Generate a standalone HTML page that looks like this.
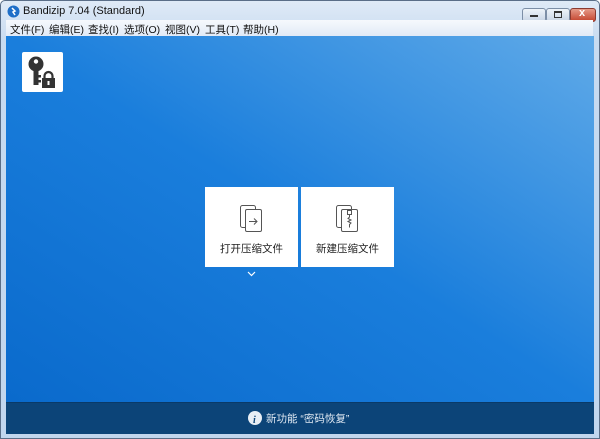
<html><head><style>
body{margin:0;width:600px;height:439px;overflow:hidden;font-family:"Liberation Sans","Noto Sans CJK SC",sans-serif;font-size:11px;position:relative}
.win{position:absolute;left:0;top:0;width:598px;height:437px;border:1px solid #5a6e88;border-radius:5px 5px 0 0;background:linear-gradient(#dfeaf7,#c8dbf0 40px,#c1d6ee);}
.title{position:absolute;left:22px;top:4px;font-size:11px;color:#111;}
.menu{position:absolute;left:6px;top:20px;width:587px;height:16px;background:linear-gradient(#f6f9fd,#e1eaf6);}
.mi{position:absolute;top:2px;font-size:10.5px;color:#111;white-space:nowrap}
.main{position:absolute;left:6px;top:36px;width:588px;height:366px;background:linear-gradient(to top right,#0a6acc 0%,#1a7edc 50%,#60aae8 100%);}
.status{position:absolute;left:6px;top:402px;width:588px;height:31px;background:#0c4478;border-top:1px solid #0a3a68;color:#dfe8f2;}
.tile{position:absolute;top:187px;width:93px;height:80px;background:#fff;}
.tile div{position:absolute;width:100%;top:54px;text-align:center;font-size:10.5px;color:#222}
.btn{position:absolute;top:7px;height:12px;border:1px solid #7c8ea6;border-radius:3px;background:linear-gradient(#eef3f9,#c9d6e6);}
</style></head><body>
<div class="win">
<svg style="position:absolute;left:6px;top:4px" width="13" height="13"><circle cx="6.5" cy="6.5" r="6" fill="#1f6fc8"/><path d="M5 3l3 3-2 1 2 3" stroke="#fff" stroke-width="1.5" fill="none"/></svg>
<div class="title">Bandizip 7.04 (Standard)</div>
<div class="btn" style="left:521px;width:22px"><div style="position:absolute;left:7px;top:6px;width:8px;height:2px;background:#333"></div></div>
<div class="btn" style="left:545px;width:22px"><div style="position:absolute;left:7px;top:2px;width:6px;height:4px;border:1px solid #333;border-top-width:2px"></div></div>
<div class="btn" style="left:569px;width:24px;border-color:#8a3a30;background:linear-gradient(#e59a88,#c4452f)"><div style="position:absolute;left:8px;top:-2px;color:#fff;font-weight:bold;font-size:11px">x</div></div>
</div>
<div class="menu">
<span class="mi" style="left:4px">文件(F)</span><span class="mi" style="left:43px">编辑(E)</span><span class="mi" style="left:82px">查找(I)</span><span class="mi" style="left:118px">选项(O)</span><span class="mi" style="left:159px">视图(V)</span><span class="mi" style="left:199px">工具(T)</span><span class="mi" style="left:237px">帮助(H)</span>
</div>
<div class="main"></div>
<div style="position:absolute;left:22px;top:52px;width:41px;height:40px;background:#fff;border-radius:2px">
<svg width="41" height="40"><circle cx="14" cy="12" r="7.5" fill="#333"/><circle cx="14" cy="9.5" r="2.2" fill="#fff"/><rect x="11.5" y="17" width="5" height="16" fill="#333"/><rect x="16" y="23" width="3" height="2.5" fill="#333"/><rect x="16" y="28" width="3" height="2.5" fill="#333"/><path d="M22.5 27v-3a4 4 0 0 1 8 0v3" stroke="#333" stroke-width="2.2" fill="none"/><rect x="20" y="26" width="13" height="10" fill="#333"/><rect x="25.5" y="29" width="2" height="4" fill="#fff"/></svg>
</div>
<div class="tile" style="left:205px">
<svg style="position:absolute;left:34px;top:17px" width="26" height="30" fill="none" stroke="#555" stroke-width="1"><rect x="1.5" y="1.5" width="15" height="22" rx="2"/><rect x="6.5" y="5.5" width="16" height="22" rx="1.5" fill="#fff"/><path d="M10 17.5h8M15 14.5l3 3-3 3"/></svg>
<div>打开压缩文件</div></div>
<div class="tile" style="left:301px">
<svg style="position:absolute;left:34px;top:17px" width="26" height="30" fill="none" stroke="#555" stroke-width="1"><rect x="1.5" y="1.5" width="15" height="22" rx="2"/><rect x="6.5" y="5.5" width="16" height="22" rx="1.5" fill="#fff"/><rect x="12.5" y="6.5" width="4" height="4"/><path d="M14.5 11v2l-1.5 1.5 3 1.5-3 1.5 3 1.5-1.5 1.5v3"/></svg>
<div>新建压缩文件</div></div>
<svg style="position:absolute;left:247px;top:271px" width="9" height="6"><path d="M1 1l3.5 3.5L8 1" stroke="#fff" stroke-width="1.2" fill="none"/></svg>
<div class="status">
<svg style="position:absolute;left:242px;top:8px" width="14" height="14"><circle cx="7" cy="7" r="7" fill="#e8eef5"/><text x="5" y="12" font-size="10" font-style="italic" font-weight="bold" fill="#0c4478" font-family="Liberation Serif">i</text></svg>
<div style="position:absolute;left:260px;top:8px;font-size:10.5px">新功能 “密码恢复”</div>
</div>
</body></html>
